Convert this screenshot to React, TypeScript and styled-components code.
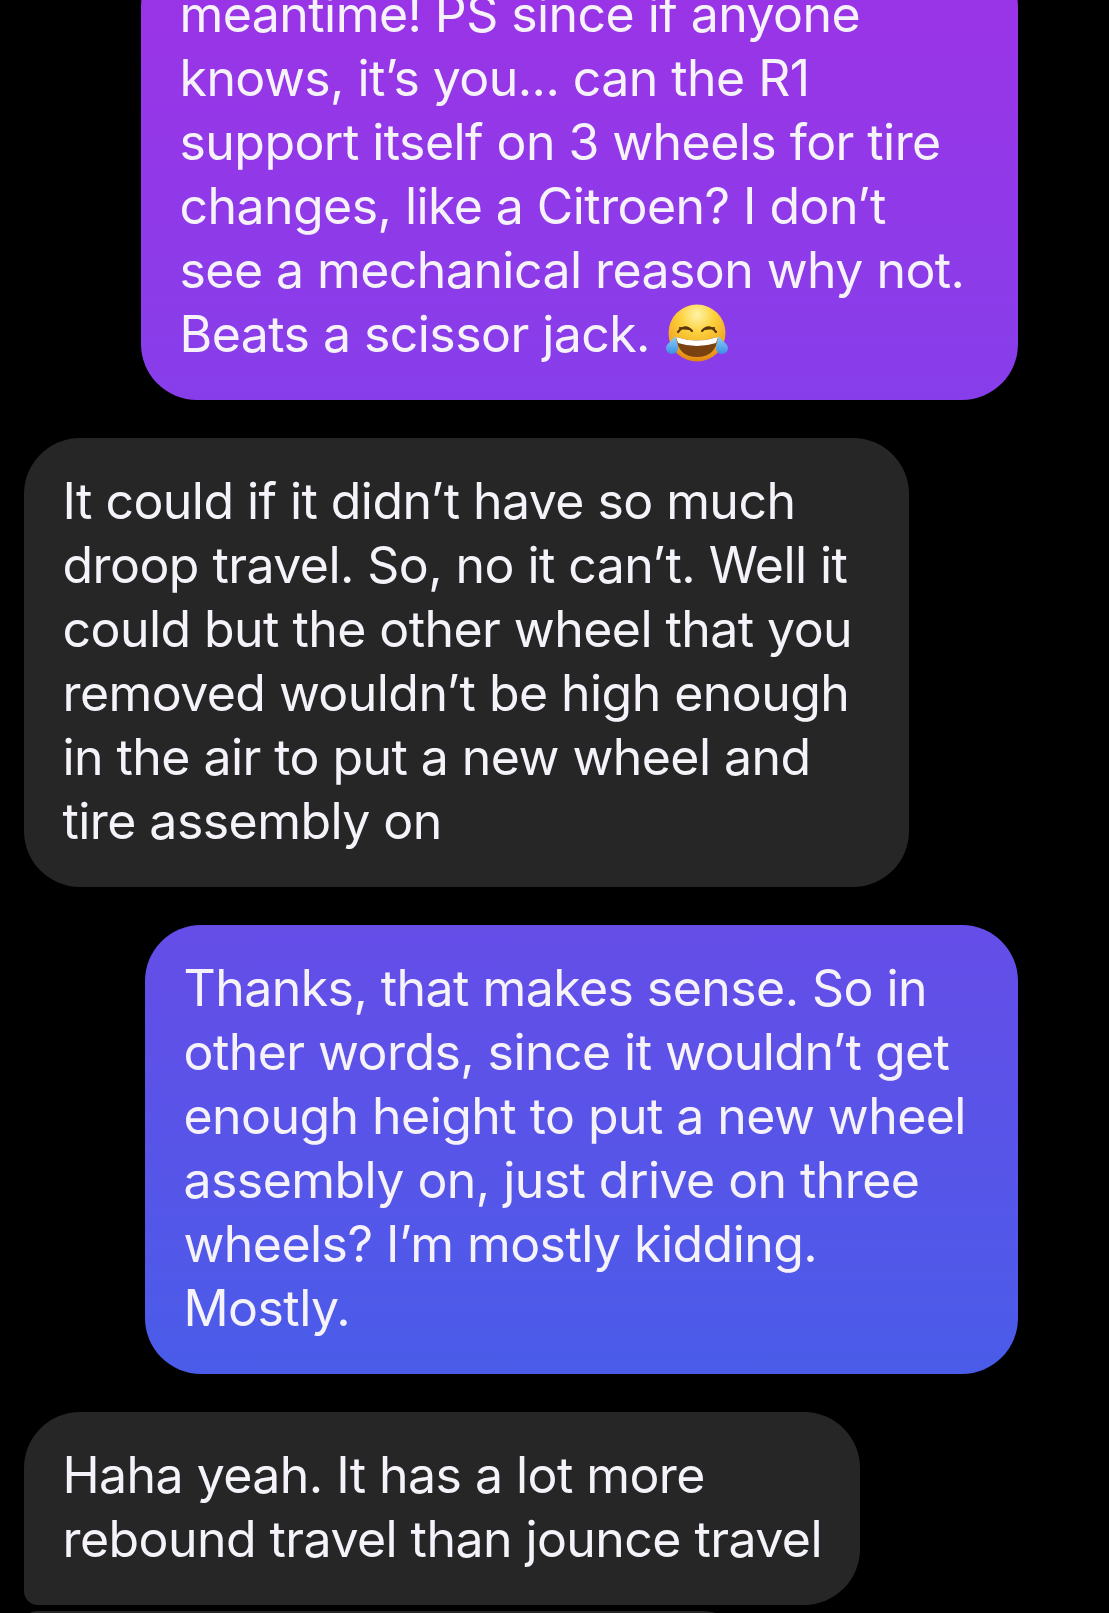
import React from "react";
import styled, { createGlobalStyle } from "styled-components";

const Global = createGlobalStyle`
  html, body { margin: 0; padding: 0; background: #000; }
`;

const Screen = styled.div`
  width: 1109px;
  height: 1613px;
  overflow: hidden;
  background: #000;
`;

const Thread = styled.main`
  display: flex;
  flex-direction: column;
  align-items: flex-start;
  box-sizing: border-box;
  width: 100%;
  margin-top: -49px;
  padding: 0 91px 0 24px;
  font-family: Inter, "Liberation Sans", sans-serif;
`;

const Bubble = styled.div<{ $mine?: boolean; $w: number; $mt: number; $bg: string; $radius?: string }>`
  flex: none;
  box-sizing: border-box;
  width: ${(p) => p.$w}px;
  margin-top: ${(p) => p.$mt}px;
  align-self: ${(p) => (p.$mine ? "flex-end" : "flex-start")};
  padding: 31px 38px 34px 38.5px;
  border-radius: ${(p) => p.$radius ?? "56px"};
  background: ${(p) => p.$bg};
  color: #f5f3f9;
  font-size: 50px;
  line-height: 64px;
  letter-spacing: -0.56px;
  white-space: pre;
`;

const Emoji = styled.svg`
  display: inline-block;
  width: 62px;
  height: 62px;
  vertical-align: -14px;
  margin-left: 3px;
`;

const NextBubble = styled.div`
  flex: none;
  width: 728px;
  height: 100px;
  margin-top: 6px;
  border-radius: 14px 56px 56px 56px;
  background: #262626;
`;

const LaughEmoji = () => (
  <Emoji viewBox="0 0 62 62" aria-hidden="true">
    <defs>
      <radialGradient id="face" cx="50%" cy="18%" r="85%">
        <stop offset="0" stopColor="#fff3a8" />
        <stop offset="0.35" stopColor="#fdd23e" />
        <stop offset="0.8" stopColor="#f0a21e" />
        <stop offset="1" stopColor="#d97f10" />
      </radialGradient>
      <linearGradient id="tear" x1="0" y1="0" x2="0" y2="1">
        <stop offset="0" stopColor="#8fd0f8" />
        <stop offset="1" stopColor="#3b8fe6" />
      </linearGradient>
    </defs>
    <circle cx="31" cy="29" r="28.5" fill="url(#face)" />
    <path d="M12 28q7-9 14-1M36 27q7-8 14 1M14 24l9 1M39 25l9-1" fill="none" stroke="#5a3410" strokeWidth="2.2" strokeLinecap="round" />
    <path d="M10 33q21 7 42 0q-2 20-21 20T10 33z" fill="#7a4210" />
    <path d="M10 33q21 7 42 0l-2 6q-19 6-38 0z" fill="#fff" />
    <path d="M9 32c-3 5-9 8-9 12a6 6 0 0 0 12 0c0-4-2-8-3-12zM53 32c3 5 9 8 9 12a6 6 0 0 1-12 0c0-4 2-8 3-12z" fill="url(#tear)" />
  </Emoji>
);

export default function App() {
  return (
    <Screen>
      <Global />
      <Thread>
        <Bubble $mine $w={877} $mt={0} $bg="linear-gradient(180deg, #9c33e6 0%, #873eea 100%)">
          {"meantime! PS since if anyone\nknows, it\u2019s you... can the R1\nsupport itself on 3 wheels for tire\nchanges, like a Citroen? I don\u2019t\nsee a mechanical reason why not.\nBeats a scissor jack."} <LaughEmoji />
        </Bubble>
        <Bubble $w={885} $mt={38} $bg="#262626">
          {"It could if it didn\u2019t have so much\ndroop travel. So, no it can\u2019t. Well it\ncould but the other wheel that you\nremoved wouldn\u2019t be high enough\nin the air to put a new wheel and\ntire assembly on"}
        </Bubble>
        <Bubble $mine $w={873} $mt={38} $bg="linear-gradient(180deg, #654de8 0%, #4a5ce9 100%)">
          {"Thanks, that makes sense. So in\nother words, since it wouldn\u2019t get\nenough height to put a new wheel\nassembly on, just drive on three\nwheels? I\u2019m mostly kidding.\nMostly."}
        </Bubble>
        <Bubble $w={836} $mt={38} $bg="#262626" $radius="56px 56px 56px 14px">
          {"Haha yeah. It has a lot more\nrebound travel than jounce travel"}
        </Bubble>
        <NextBubble />
      </Thread>
    </Screen>
  );
}
